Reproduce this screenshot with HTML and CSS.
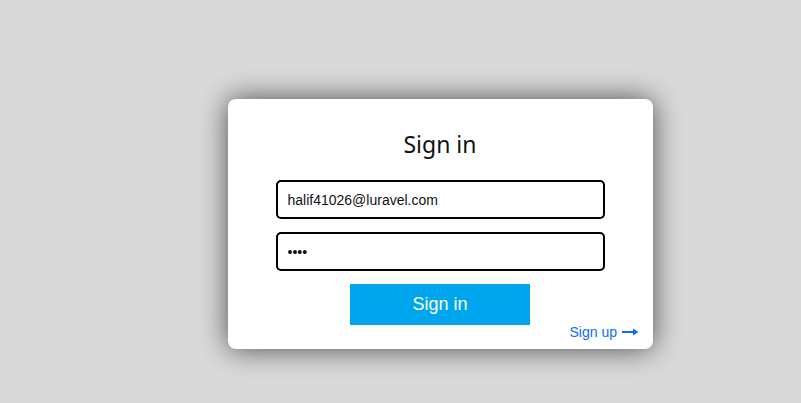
FILE: index.html
```html
<!DOCTYPE html>
<html>
<head>
<meta charset="utf-8">
<link rel="stylesheet" href="styles.css">
</head>
<body>
<main class="page">
  <form class="card">
    <h1 class="title">Sign in</h1>
    <input class="field" type="text" value="halif41026@luravel.com">
    <input class="field" type="password" value="abcd">
    <button class="submit" type="button">Sign in</button>
    <a class="signup" href="#">Sign up
      <svg class="arrow" width="17" height="10" viewBox="0 0 17 10"><path d="M0 5H13" stroke="currentColor" stroke-width="2"/><path d="M11 1.5L16.5 5L11 8.5Z" fill="currentColor"/></svg>
    </a>
  </form>
</main>
</body>
</html>
```
FILE: styles.css
```css
html, body {
  margin: 0;
  padding: 0;
  background: #d9d9d9;
  height: 100%;
  overflow: hidden;
}
.page {
  padding: 99px 0 0 228px;
}
.card {
  box-sizing: border-box;
  width: 425px;
  height: 250px;
  background: #fff;
  border-radius: 8px;
  box-shadow: 0 0 28px rgba(0, 0, 0, 0.65);
  display: flex;
  flex-direction: column;
  align-items: center;
  padding: 28px 1px 0 0;
  position: relative;
}
.title {
  margin: 0 0 18px;
  font-family: "Noto Sans", sans-serif;
  font-weight: 400;
  font-size: 23px;
  line-height: 35px;
  color: #111;
}
.field {
  box-sizing: border-box;
  width: 329px;
  height: 39px;
  border: 2px solid #000;
  border-radius: 5px;
  padding: 0 10px;
  margin-bottom: 13px;
  font-family: "Liberation Sans", Arial, sans-serif;
  font-size: 14px;
  color: #111;
  outline: none;
}
.submit {
  width: 180px;
  height: 41px;
  border: none;
  background: #00a6ed;
  color: #fff;
  font-family: "Liberation Sans", Arial, sans-serif;
  font-size: 18px;
  padding: 0;
}
.signup {
  position: absolute;
  right: 14px;
  bottom: 9px;
  display: flex;
  align-items: center;
  gap: 5px;
  color: #0f6cff;
  text-decoration: none;
  font-family: "Liberation Sans", Arial, sans-serif;
  font-size: 14px;
}
.arrow {
  display: block;
}
```
